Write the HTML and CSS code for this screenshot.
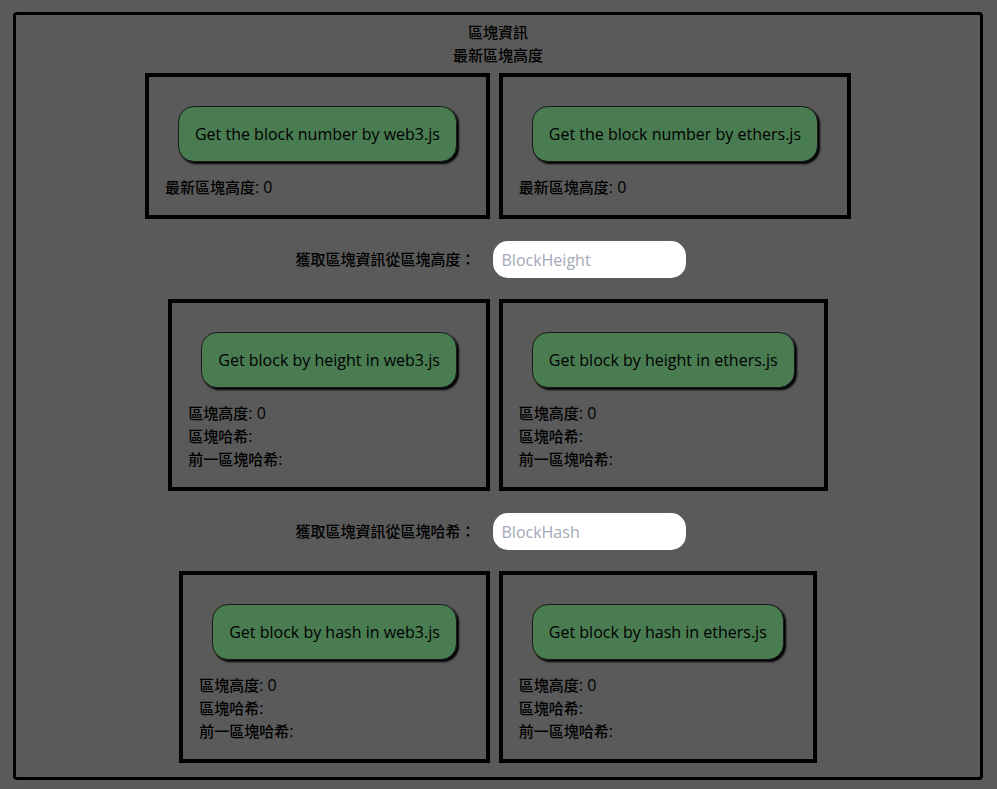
FILE: index.html
```html
<!DOCTYPE html>
<html lang="zh-Hant">
<head>
<meta charset="utf-8">
<title>區塊資訊</title>
<link rel="stylesheet" href="styles.css">
</head>
<body>
<div class="app">
  <div class="title">區塊資訊</div>
  <div class="title">最新區塊高度</div>

  <div class="row">
    <div class="card">
      <button class="btn">Get the block number by web3.js</button>
      <div class="info">最新區塊高度<span class="lat">: 0</span></div>
    </div>
    <div class="card">
      <button class="btn">Get the block number by ethers.js</button>
      <div class="info">最新區塊高度<span class="lat">: 0</span></div>
    </div>
  </div>

  <div class="search">
    <label class="search-label">獲取區塊資訊從區塊高度：</label>
    <input class="search-input" type="text" placeholder="BlockHeight">
  </div>

  <div class="row">
    <div class="card">
      <button class="btn">Get block by height in web3.js</button>
      <div class="info">區塊高度<span class="lat">: 0</span></div>
      <div class="info">區塊哈希<span class="lat">:</span></div>
      <div class="info">前一區塊哈希<span class="lat">:</span></div>
    </div>
    <div class="card">
      <button class="btn">Get block by height in ethers.js</button>
      <div class="info">區塊高度<span class="lat">: 0</span></div>
      <div class="info">區塊哈希<span class="lat">:</span></div>
      <div class="info">前一區塊哈希<span class="lat">:</span></div>
    </div>
  </div>

  <div class="search">
    <label class="search-label">獲取區塊資訊從區塊哈希：</label>
    <input class="search-input" type="text" placeholder="BlockHash">
  </div>

  <div class="row">
    <div class="card">
      <button class="btn">Get block by hash in web3.js</button>
      <div class="info">區塊高度<span class="lat">: 0</span></div>
      <div class="info">區塊哈希<span class="lat">:</span></div>
      <div class="info">前一區塊哈希<span class="lat">:</span></div>
    </div>
    <div class="card">
      <button class="btn">Get block by hash in ethers.js</button>
      <div class="info">區塊高度<span class="lat">: 0</span></div>
      <div class="info">區塊哈希<span class="lat">:</span></div>
      <div class="info">前一區塊哈希<span class="lat">:</span></div>
    </div>
  </div>
</div>
</body>
</html>
```

FILE: styles.css
```css
html, body {
  margin: 0;
  padding: 0;
  background: #5a5a5a;
}

body {
  font-family: "Open Sans", "Noto Sans CJK TC", sans-serif;
  font-size: 15px;
  font-weight: 500;
  line-height: 23px;
  color: #000;
}

.app {
  margin: 12px 14px 12px 13px;
  border: 3px solid #000;
  border-radius: 4px;
  padding: 6px 0 14px;
  display: flex;
  flex-direction: column;
  align-items: center;
}

.title {
  text-align: center;
}

.title + .row {
  margin-top: 6px;
}

.row {
  display: flex;
  justify-content: center;
  gap: 9px;
}

.card {
  border: 4px solid #000;
  padding: 16px;
  display: flex;
  flex-direction: column;
  align-items: flex-start;
}

.btn {
  align-self: center;
  margin: 13px 13px 14px;
  padding: 16px 16px;
  font-family: "Open Sans", "Noto Sans CJK TC", sans-serif;
  font-size: 16px;
  font-weight: 500;
  line-height: 22px;
  color: #000;
  background: #4a7c52;
  border: 1px solid #1a1a1a;
  border-radius: 16px;
  box-shadow: 2px 2px 2px #000;
}

.info {
  white-space: nowrap;
}

.lat {
  font-size: 16px;
  font-weight: 500;
}

.search {
  display: flex;
  align-items: center;
  margin: 22px 0 21px;
  padding-right: 15px;
}

.search-label {
  font-size: 15px;
}

.search-input {
  margin-left: 17px;
  width: 193px;
  height: 37px;
  box-sizing: border-box;
  padding: 0 9px;
  border: none;
  border-radius: 15px;
  background: #fff;
  font-family: "Open Sans", "Noto Sans CJK TC", sans-serif;
  font-size: 16px;
  color: #111;
  outline: none;
}

.search-input::placeholder {
  color: #a3a9b6;
}
```
